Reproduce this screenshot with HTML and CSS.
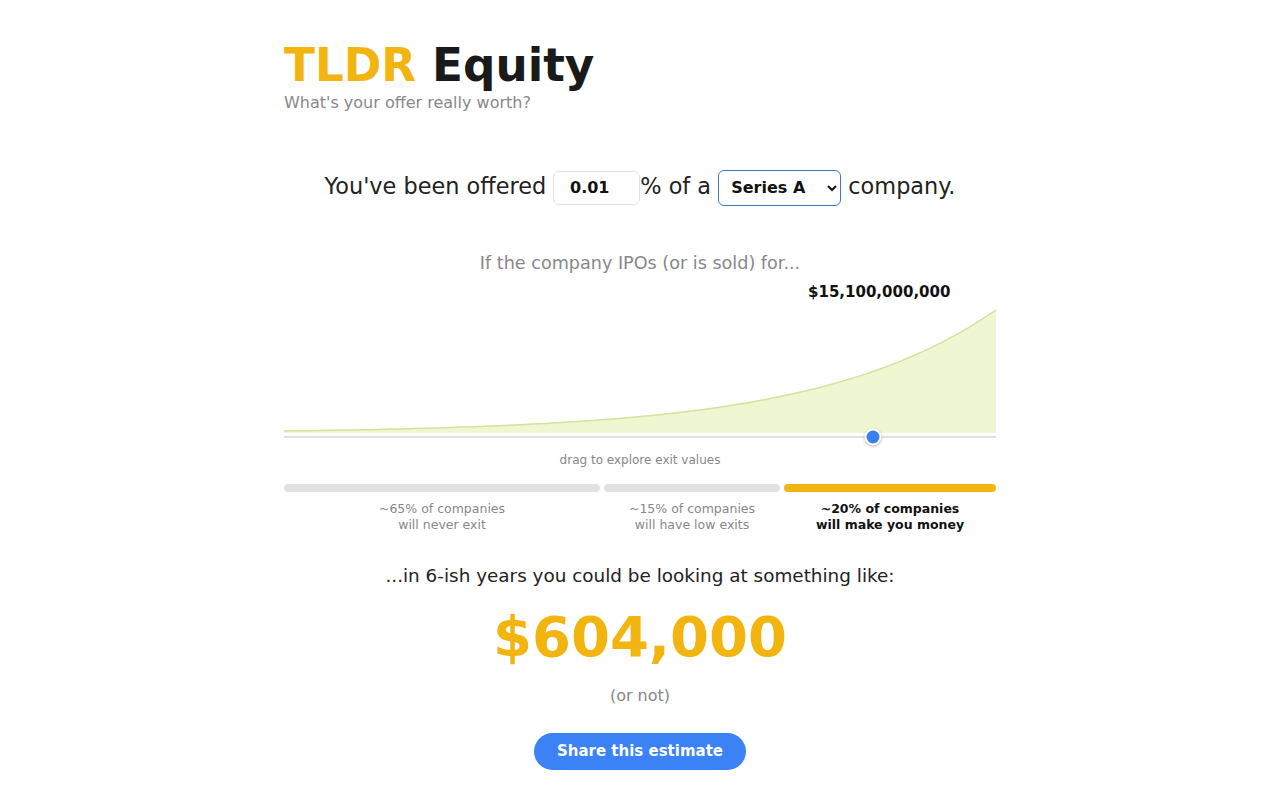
FILE: index.html
```html
<!DOCTYPE html>
<html lang="en">
<head>
    <meta charset="UTF-8">
    <meta name="viewport" content="width=device-width, initial-scale=1.0">
    <title>TLDR Equity</title>
    <link rel="stylesheet" href="styles.css">
</head>
<body>
    <div class="container">
        <h1><span class="brand">TLDR</span> Equity</h1>
        <div class="tagline">What's your offer really worth?</div>

        <div class="offer">
            You've been offered <input type="text" class="pct" value="0.01">% of a <select class="stage">
                <option>Seed</option>
                <option selected>Series A</option>
                <option>Series B</option>
                <option>Series C</option>
            </select> company.
        </div>

        <div class="question">If the company IPOs (or is sold) for...</div>

        <div class="chart">
            <div class="value-row">
                <span class="exit-value">$15,100,000,000</span>
            </div>
            <svg class="curve" viewBox="0 0 712 124" preserveAspectRatio="none">
                <path class="area" id="area"/>
                <path class="line" id="line"/>
            </svg>
            <div class="slider">
                <div class="handle"></div>
            </div>
            <div class="hint">drag to explore exit values</div>
        </div>

        <div class="odds">
            <div class="segment never">
                <div class="bar"></div>
                <div class="label">~65% of companies<br>will never exit</div>
            </div>
            <div class="segment low">
                <div class="bar"></div>
                <div class="label">~15% of companies<br>will have low exits</div>
            </div>
            <div class="segment money">
                <div class="bar"></div>
                <div class="label">~20% of companies<br>will make you money</div>
            </div>
        </div>

        <div class="lead">...in 6-ish years you could be looking at something like:</div>
        <div class="payout">$604,000</div>
        <div class="caveat">(or not)</div>

        <button class="share">Share this estimate</button>
    </div>

    <script>
        // exit value curve, exponential growth across the slider range
        const W = 712, H = 124, k = 4;
        let pts = [];
        for (let i = 0; i <= 60; i++) {
            const f = i / 60;
            const g = (Math.exp(k * f) - 1) / (Math.exp(k) - 1);
            pts.push((f * W).toFixed(1) + ' ' + (1 + 121 * (1 - g)).toFixed(1));
        }
        const line = 'M' + pts.join(' L');
        document.getElementById('line').setAttribute('d', line);
        document.getElementById('area').setAttribute('d', line + ' L' + W + ' ' + H + ' L0 ' + H + ' Z');
    </script>
</body>
</html>
```

FILE: styles.css
```css
body {
    font-family: 'DejaVu Sans', 'Verdana', sans-serif;
    margin: 0;
    background-color: #fff;
    color: #222;
}

.container {
    width: 712px;
    margin: 0 auto;
    padding-top: 40px;
    text-align: center;
}

h1 {
    font-size: 45.3px;
    line-height: 52px;
    font-weight: bold;
    color: #1a1a1a;
    margin: 0;
    text-align: left;
}

.brand {
    color: #f2b50f;
}

.tagline {
    font-size: 16px;
    line-height: 19px;
    color: #888;
    margin-top: 1px;
    text-align: left;
}

.offer {
    margin-top: 56px;
    font-size: 22.4px;
    line-height: 36px;
    color: #222;
}

.pct {
    width: 87px;
    height: 34px;
    box-sizing: border-box;
    border: 1px solid #e2e2e2;
    border-radius: 6px;
    font-family: inherit;
    font-size: 16px;
    font-weight: bold;
    color: #111;
    text-align: center;
    vertical-align: middle;
    padding: 0 14px 0 0;
}

.stage {
    width: 123px;
    height: 36px;
    box-sizing: border-box;
    border: 1px solid #3a78d0;
    border-radius: 6px;
    background: #fff;
    font-family: inherit;
    font-size: 16px;
    font-weight: bold;
    color: #111;
    padding: 0 6px 0 8px;
    vertical-align: middle;
}

.question {
    margin-top: 46px;
    font-size: 17.6px;
    line-height: 22px;
    color: #888;
}

.chart {
    margin-top: 9px;
}

.value-row {
    position: relative;
    height: 18px;
}

.exit-value {
    position: absolute;
    left: 83.6%;
    top: 0;
    transform: translateX(-50%);
    font-size: 15px;
    line-height: 18px;
    font-weight: bold;
    color: #111;
    white-space: nowrap;
}

.curve {
    display: block;
    width: 100%;
    height: 124px;
    margin-top: 8px;
}

.area {
    fill: #eff6d2;
}

.line {
    fill: none;
    stroke: #d2e39b;
    stroke-width: 1.5;
}

.slider {
    position: relative;
    height: 2px;
    margin-top: 3px;
    background: #e2e2e2;
}

.handle {
    position: absolute;
    left: 82.7%;
    top: 50%;
    width: 13px;
    height: 13px;
    background: #3b7ff0;
    border: 2px solid #fff;
    border-radius: 50%;
    box-shadow: 0 1px 3px rgba(0, 0, 0, 0.3);
    transform: translate(-50%, -50%);
}

.hint {
    margin-top: 14px;
    font-size: 12px;
    line-height: 16px;
    color: #888;
}

.odds {
    display: flex;
    gap: 4px;
    margin-top: 16px;
}

.segment.never { flex: 316; }
.segment.low { flex: 176; }
.segment.money { flex: 212; }

.bar {
    height: 8px;
    border-radius: 4px;
    background: #e2e2e2;
}

.money .bar {
    background: #f2b50f;
}

.label {
    margin-top: 9px;
    font-size: 12.5px;
    line-height: 16px;
    color: #888;
}

.money .label {
    color: #111;
    font-weight: bold;
}

.lead {
    margin-top: 32px;
    font-size: 18.4px;
    line-height: 22px;
    color: #222;
}

.payout {
    margin-top: 18px;
    font-size: 56px;
    line-height: 64px;
    font-weight: bold;
    color: #f2b50f;
}

.caveat {
    margin-top: 17px;
    font-size: 16px;
    line-height: 20px;
    color: #888;
}

.share {
    margin-top: 27px;
    height: 37px;
    padding: 0 23px;
    border: none;
    border-radius: 19px;
    background: #3b82f6;
    color: #fff;
    font-family: inherit;
    font-size: 15px;
    font-weight: bold;
    cursor: pointer;
}
```
